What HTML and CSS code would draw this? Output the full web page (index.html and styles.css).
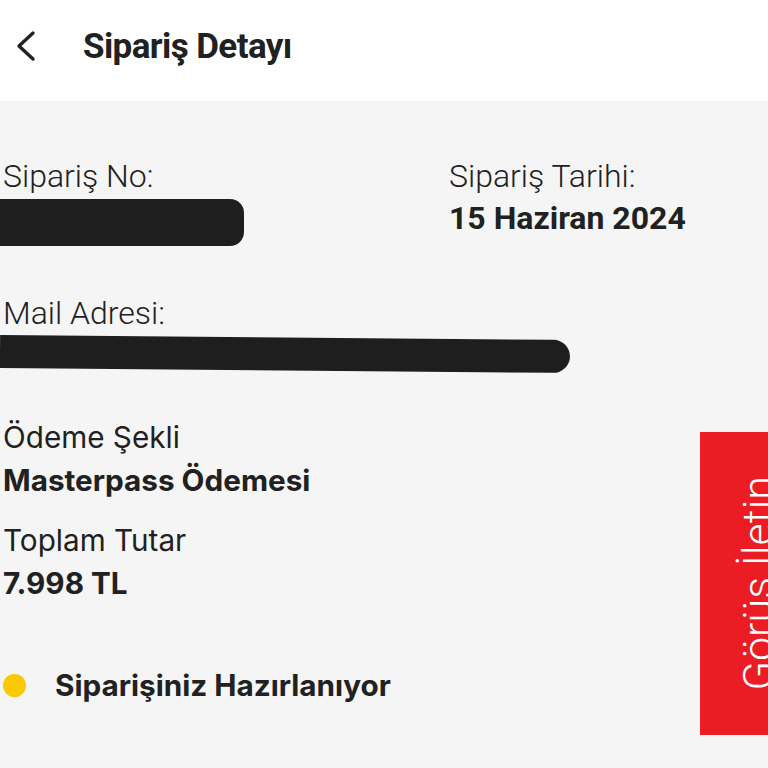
FILE: index.html
```html
<!DOCTYPE html>
<html lang="tr">
<head>
    <meta charset="UTF-8">
    <meta name="viewport" content="width=device-width, initial-scale=1.0">
    <title>Sipariş Detayı</title>
    <link rel="stylesheet" href="styles.css">
</head>
<body>

<header class="topbar">
    <svg class="back" width="22" height="32" viewBox="0 0 22 32">
        <path d="M19 3 L5 16 L19 29" fill="none" stroke="#222" stroke-width="3.4" stroke-linecap="round" stroke-linejoin="round"/>
    </svg>
    <h1>Sipariş Detayı</h1>
</header>

<main class="detail">
    <!-- Order no / date -->
    <div class="row-two">
        <div class="col">
            <div class="label">Sipariş No:</div>
            <div class="redact redact-no"></div>
        </div>
        <div class="col-date">
            <div class="label">Sipariş Tarihi:</div>
            <div class="value-cond">15 Haziran 2024</div>
        </div>
    </div>

    <!-- Mail -->
    <div class="mail">
        <div class="label">Mail Adresi:</div>
        <div class="redact redact-mail"></div>
    </div>

    <!-- Payment -->
    <div class="info info-first">
        <div class="info-label">Ödeme Şekli</div>
        <div class="info-value">Masterpass Ödemesi</div>
    </div>
    <div class="info">
        <div class="info-label">Toplam Tutar</div>
        <div class="info-value">7.998 TL</div>
    </div>

    <div class="status">
        <span class="dot"></span>
        <span class="status-text">Siparişiniz Hazırlanıyor</span>
    </div>
</main>

<div class="feedback">
    <span class="feedback-text">Görüş İletin</span>
</div>

</body>
</html>
```

FILE: styles.css
```css
body {
    margin: 0;
    padding: 0;
    background-color: #f5f5f5;
    color: #212121;
    font-family: Inter, "Liberation Sans", sans-serif;
    width: 768px;
    height: 768px;
    overflow: hidden;
    position: relative;
}
.topbar {
    background-color: #fff;
    height: 101px;
    display: flex;
    align-items: center;
    padding-left: 14px;
    box-sizing: border-box;
}
.back {
    margin-top: -10px;
}
.topbar h1 {
    margin: -8px 0 0 47px;
    font-family: Roboto, sans-serif;
    font-weight: 700;
    font-size: 35px;
    letter-spacing: -0.6px;
}
.detail {
    padding: 55px 0 0 3px;
}
.row-two {
    display: flex;
}
.col {
    width: 446px;
    flex-shrink: 0;
}
.label {
    font-family: Roboto, sans-serif;
    font-weight: 300;
    font-size: 32px;
    line-height: 40px;
}
.value-cond {
    font-family: Roboto, sans-serif;
    font-weight: 700;
    font-size: 32px;
    line-height: 44px;
}
.redact {
    background-color: #1e1e1e;
    margin-left: -3px;
}
.redact-no {
    width: 244px;
    height: 47px;
    margin-top: 3px;
    border-radius: 0 14px 14px 0;
}
.mail {
    margin-top: 47px;
}
.redact-mail {
    width: 570px;
    height: 33px;
    margin-top: 2px;
    border-radius: 0 17px 17px 0;
    transform: rotate(0.5deg);
    transform-origin: left center;
}
.info-first {
    margin-top: 48px;
}
.info-label {
    font-size: 29.7px;
    line-height: 43px;
}
.info-value {
    font-size: 29.7px;
    font-weight: 700;
    line-height: 43px;
    margin-bottom: 17px;
}
.status {
    display: flex;
    align-items: center;
    margin-top: 62px;
}
.dot {
    width: 23px;
    height: 23px;
    border-radius: 50%;
    background-color: #fcc800;
}
.status-text {
    margin-left: 29px;
    font-size: 29.7px;
    font-weight: 700;
}
.feedback {
    position: absolute;
    left: 700px;
    top: 432px;
    width: 90px;
    height: 303px;
    background-color: #ec1c24;
    display: flex;
    align-items: center;
    padding-left: 37px;
    box-sizing: border-box;
}
.feedback-text {
    color: #fff;
    font-family: Roboto, sans-serif;
    font-weight: 300;
    font-size: 43px;
    line-height: 43px;
    white-space: nowrap;
    writing-mode: vertical-rl;
    transform: rotate(180deg);
}
```
